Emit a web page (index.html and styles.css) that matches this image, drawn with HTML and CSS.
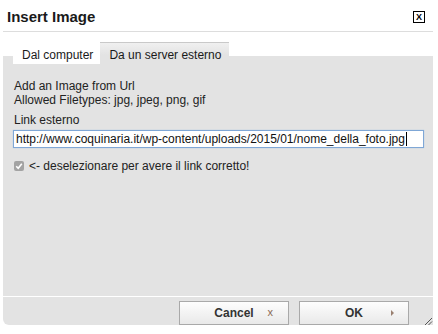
FILE: index.html
```html
<!DOCTYPE html>
<html lang="it">
<head>
  <meta charset="UTF-8">
  <title>Insert Image</title>
  <link rel="stylesheet" href="styles.css">
</head>
<body>
  <div class="dialog">
    <div class="titlebar">
      <span class="title">Insert Image</span>
      <span class="close">X</span>
    </div>

    <div class="tabs">
      <div class="tab">Dal computer</div>
      <div class="tab active">Da un server esterno</div>
    </div>

    <div class="panel">
      <p class="info">Add an Image from Url<br>Allowed Filetypes: jpg, jpeg, png, gif</p>
      <label class="field-label">Link esterno</label>
      <div class="field"><span>http://www.coquinaria.it/wp-content/uploads/2015/01/nome_della_foto.jpg</span><span class="caret"></span></div>
      <div class="check-row">
        <span class="check">
          <svg width="10" height="10" viewBox="0 0 10 10"><path d="M2.2 5.2 L4.2 7.2 L7.8 2.8" fill="none" stroke="#fff" stroke-width="1.6"/></svg>
        </span>
        <span>&lt;- deselezionare per avere il link corretto!</span>
      </div>
    </div>

    <div class="footer">
      <button class="btn">Cancel<span class="btn-icon cancel-icon">x</span></button>
      <button class="btn">OK<span class="btn-icon ok-icon"></span></button>
    </div>

    <svg class="grip" width="14" height="14" viewBox="0 0 14 14">
      <path d="M13 1 L1 13 M13 4.5 L4.5 13 M13 8 L8 13 M13 11.5 L11.5 13" stroke="#555" stroke-width="1"/>
    </svg>
  </div>
</body>
</html>
```

FILE: styles.css
```css
body {
  margin: 0;
  background: #fff;
  font-family: "Liberation Sans", Arial, sans-serif;
  font-size: 12px;
  color: #222;
}
.dialog {
  position: relative;
  width: 430px;
  margin-left: 3px;
}
.titlebar {
  height: 32px;
  border-bottom: 1px solid #ddd;
  display: flex;
  justify-content: space-between;
  align-items: flex-start;
  padding: 0 8px 0 4px;
  box-sizing: border-box;
}
.title {
  margin-top: 8px;
  font-size: 15px;
  font-weight: bold;
  line-height: 17px;
  color: #1a1a1a;
}
.close {
  margin-top: 11px;
  width: 10px;
  height: 10px;
  border: 1px solid #000;
  font-size: 9px;
  font-weight: bold;
  line-height: 10px;
  text-align: center;
  color: #000;
}
.tabs {
  margin-top: 10px;
  height: 22px;
  padding-left: 10px;
  display: flex;
  align-items: flex-start;
  background: linear-gradient(#fff 14px, #e3e3e3 14px);
}
.tab {
  margin-top: 2px;
  height: 20px;
  box-sizing: border-box;
  padding: 3px 7px 0 9px;
  line-height: 17px;
  background: #fff;
  color: #1a1a1a;
}
.tab.active {
  margin-top: 0;
  height: 22px;
  padding: 4px 8px 0 9px;
  border-top: 1px solid #c9c9c9;
  background: linear-gradient(#f0f0f0, #e3e3e3 12px);
}
.panel {
  background: #e3e3e3;
  height: 232px;
  padding: 15px 9px 0 11px;
  box-sizing: border-box;
}
.info {
  margin: 0;
  line-height: 14px;
}
.field-label {
  display: block;
  margin-top: 6px;
  line-height: 14px;
}
.field {
  margin-top: 3px;
  margin-left: -1px;
  height: 18px;
  box-sizing: border-box;
  border: 1px solid #7fa7d6;
  box-shadow: 0 0 1px #9fc0e6;
  background: #fff;
  padding-left: 2px;
  line-height: 16px;
  color: #111;
  display: flex;
  align-items: center;
  white-space: nowrap;
}
.caret {
  display: inline-block;
  width: 1px;
  height: 14px;
  margin-left: 1px;
  background: #000;
}
.check-row {
  margin-top: 11px;
  display: flex;
  align-items: center;
  gap: 5px;
  line-height: 14px;
}
.check {
  width: 10px;
  height: 10px;
  border-radius: 2px;
  background: #a3a3a3;
  display: flex;
}
.footer {
  margin-top: 1px;
  height: 28px;
  background: #e3e3e3;
  border-bottom-left-radius: 6px;
  display: flex;
  justify-content: flex-end;
  align-items: flex-start;
  gap: 10px;
  padding: 4px 24px 0 0;
  box-sizing: border-box;
}
.btn {
  position: relative;
  width: 110px;
  height: 24px;
  border: 1px solid #a9a9a9;
  background: linear-gradient(#fdfdfd, #e9e9e9);
  font-family: "Liberation Sans", Arial, sans-serif;
  font-size: 12px;
  font-weight: bold;
  color: #333;
  padding: 0;
}
.btn-icon {
  position: absolute;
  top: 4px;
  right: 15px;
  font-weight: normal;
  color: #8a6a55;
  font-size: 11px;
}
.ok-icon {
  top: 8px;
  right: 14px;
  width: 0;
  height: 0;
  border-left: 3px solid #9a8070;
  border-top: 3px solid transparent;
  border-bottom: 3px solid transparent;
}
.grip {
  position: absolute;
  right: 0;
  bottom: -6px;
}
```
